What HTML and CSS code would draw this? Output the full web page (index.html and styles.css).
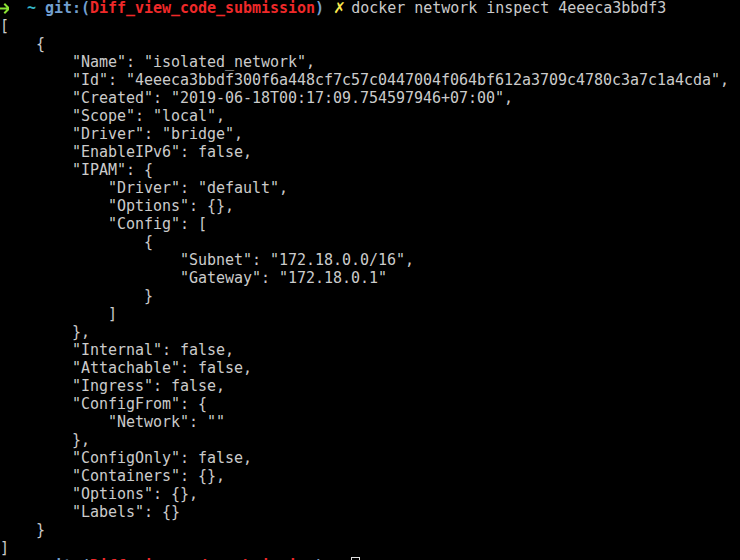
FILE: index.html
```html
<!DOCTYPE html>
<html>
<head>
<meta charset="utf-8">
<link rel="stylesheet" href="styles.css">
</head>
<body>
<pre class="term"><svg class="p-arrow" viewBox="0 0 9 18" width="9" height="18" aria-label="➜"><path d="M0.5 9.5 H9 M5 5.5 L9 9.5 L5 13.5" fill="none" stroke="#8ae234" stroke-width="2" stroke-linecap="square"/></svg>  <span class="p-tilde">~</span> <span class="p-git">git:(</span><span class="p-branch">Diff_view_code_submission</span><span class="p-git">)</span> <span class="p-x">✗</span> docker network inspect 4eeeca3bbdf3
[
    {
        "Name": "isolated_network",
        "Id": "4eeeca3bbdf300f6a448cf7c57c0447004f064bf612a3709c4780c3a7c1a4cda",
        "Created": "2019-06-18T00:17:09.754597946+07:00",
        "Scope": "local",
        "Driver": "bridge",
        "EnableIPv6": false,
        "IPAM": {
            "Driver": "default",
            "Options": {},
            "Config": [
                {
                    "Subnet": "172.18.0.0/16",
                    "Gateway": "172.18.0.1"
                }
            ]
        },
        "Internal": false,
        "Attachable": false,
        "Ingress": false,
        "ConfigFrom": {
            "Network": ""
        },
        "ConfigOnly": false,
        "Containers": {},
        "Options": {},
        "Labels": {}
    }
]
<svg class="p-arrow" viewBox="0 0 9 18" width="9" height="18" aria-label="➜"><path d="M0.5 9.5 H9 M5 5.5 L9 9.5 L5 13.5" fill="none" stroke="#8ae234" stroke-width="2" stroke-linecap="square"/></svg>  <span class="p-tilde">~</span> <span class="p-git">git:(</span><span class="p-branch">Diff_view_code_submission</span><span class="p-git">)</span> <span class="p-x">✗</span> <span class="cursor"> </span></pre>
</body>
</html>
```
FILE: styles.css
```css
html, body {
  margin: 0;
  padding: 0;
  background: #000000;
  width: 740px;
  height: 560px;
  overflow: hidden;
}

.term {
  margin: -1px 0 0 0;
  padding: 0;
  font-family: "DejaVu Sans Mono", "Liberation Mono", monospace;
  font-size: 15px;
  line-height: 18px;
  letter-spacing: -0.03px;
  color: #cbcbcb;
  white-space: pre;
}

.p-arrow {
  display: inline-block;
  width: 9px;
  height: 18px;
  vertical-align: top;
}

.p-tilde {
  color: #34b6c8;
  font-weight: bold;
}

.p-git {
  color: #729fcf;
  font-weight: bold;
}

.p-branch {
  color: #ef2929;
  font-weight: bold;
}

.p-x {
  display: inline-block;
  width: 9px;
  color: #fce94f;
  font-family: "DejaVu Sans", sans-serif;
  font-size: 15px;
  line-height: 18px;
  vertical-align: top;
}

.cursor {
  display: inline-block;
  width: 9px;
  height: 17px;
  box-sizing: border-box;
  border: 1px solid #e0e0e0;
  vertical-align: top;
}
```
